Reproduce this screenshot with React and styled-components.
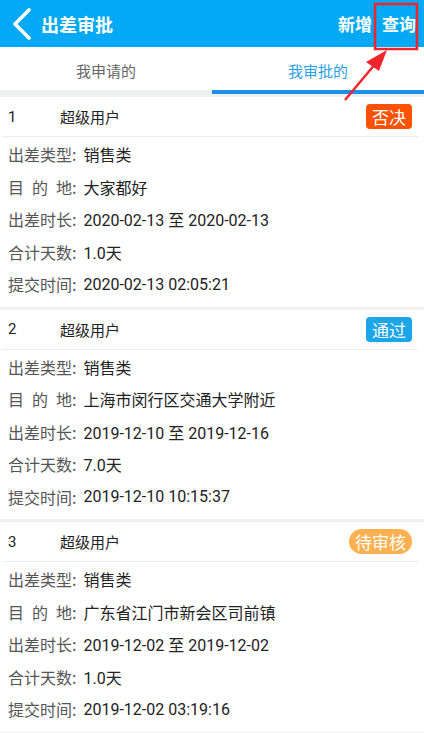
import React from "react";
import styled, { createGlobalStyle } from "styled-components";

const GlobalStyle = createGlobalStyle`
  body {
    margin: 0;
    background: #f0f0f0;
    font-family: Roboto, "Noto Sans CJK SC", sans-serif;
  }
`;

const records = [
  {
    no: 1,
    user: "超级用户",
    status: "否决",
    kind: "reject",
    type: "销售类",
    place: "大家都好",
    range: "2020-02-13 至 2020-02-13",
    days: "1.0天",
    time: "2020-02-13 02:05:21",
  },
  {
    no: 2,
    user: "超级用户",
    status: "通过",
    kind: "pass",
    type: "销售类",
    place: "上海市闵行区交通大学附近",
    range: "2019-12-10 至 2019-12-16",
    days: "7.0天",
    time: "2019-12-10 10:15:37",
  },
  {
    no: 3,
    user: "超级用户",
    status: "待审核",
    kind: "wait",
    type: "销售类",
    place: "广东省江门市新会区司前镇",
    range: "2019-12-02 至 2019-12-02",
    days: "1.0天",
    time: "2019-12-02 03:19:16",
  },
];

const badgeColors = {
  reject: "#ff5200",
  pass: "#1ba6ea",
  wait: "#ffb050",
};

function App() {
  return (
    <>
      <GlobalStyle />
      <Page>
        <TopBar>
          <Back viewBox="0 0 22 32">
            <polyline points="18,2 4,16 18,30" />
          </Back>
          <Title>出差审批</Title>
          <Actions>
            <Action>新增</Action>
            <Action>查询</Action>
          </Actions>
        </TopBar>
        <Tabs>
          <Tab>我申请的</Tab>
          <Tab active>我审批的</Tab>
        </Tabs>
        <List>
          {records.map((r) => (
            <Card key={r.no}>
              <CardHead>
                <No>{r.no}</No>
                <User>{r.user}</User>
                <Badge kind={r.kind}>{r.status}</Badge>
              </CardHead>
              <Rows>
                <Row>
                  <Label>出差类型</Label>:<Value>{r.type}</Value>
                </Row>
                <Row>
                  <Label>目的地</Label>:<Value>{r.place}</Value>
                </Row>
                <Row>
                  <Label>出差时长</Label>:<Value>{r.range}</Value>
                </Row>
                <Row>
                  <Label>合计天数</Label>:<Value>{r.days}</Value>
                </Row>
                <Row>
                  <Label>提交时间</Label>:<Value>{r.time}</Value>
                </Row>
              </Rows>
            </Card>
          ))}
        </List>
        <Marker viewBox="0 0 424 110">
          <rect x="375" y="4" width="42" height="45" />
          <line x1="345" y1="100" x2="376" y2="63" />
          <polygon points="387,50 366,62 379,71" />
        </Marker>
      </Page>
    </>
  );
}

const Page = styled.div`
  position: relative;
  width: 424px;
  min-height: 733px;
  background: #f0f0f0;
`;

const TopBar = styled.header`
  display: flex;
  align-items: center;
  height: 47px;
  padding: 0 8px 0 11px;
  box-sizing: border-box;
  background: #03a9f4;
  color: #fff;
`;

const Back = styled.svg`
  width: 22px;
  height: 32px;
  fill: none;
  stroke: #fff;
  stroke-width: 3.6;
  stroke-linecap: round;
  stroke-linejoin: round;
  margin-right: 8px;
`;

const Title = styled.h1`
  margin: 0;
  font: 700 18px "Noto Sans CJK SC", sans-serif;
  flex: 1;
`;

const Actions = styled.div`
  display: flex;
  gap: 10px;
`;

const Action = styled.span`
  font: 700 17px "Noto Sans CJK SC", sans-serif;
`;

const Tabs = styled.nav`
  display: flex;
  height: 47px;
  background: #fff;
`;

const Tab = styled.div`
  flex: 1;
  display: flex;
  align-items: center;
  justify-content: center;
  font: 400 15px "Noto Sans CJK SC", sans-serif;
  color: ${(p) => (p.active ? "#2aa0ea" : "#666")};
  border-bottom: 4px solid ${(p) => (p.active ? "#1e8fe6" : "#eceff0")};
  padding-top: 4px;
`;

const List = styled.div`
  display: flex;
  flex-direction: column;
  gap: 3px;
  padding-top: 3px;
`;

const Card = styled.section`
  background: #fff;
  padding-bottom: 6px;
`;

const CardHead = styled.div`
  display: flex;
  align-items: center;
  height: 39px;
  margin: 0 6px 0 2px;
  padding: 0 6px 0 6px;
  border-bottom: 1px solid #e8eef0;
`;

const No = styled.span`
  width: 52px;
  font: 400 15px Roboto, sans-serif;
  color: #222;
`;

const User = styled.span`
  flex: 1;
  font: 400 15px "Noto Sans CJK SC", sans-serif;
  color: #222;
`;

const Badge = styled.span`
  padding: 0 6px;
  height: 25px;
  line-height: 25px;
  border-radius: ${(p) => (p.kind === "wait" ? "13px" : "4px")};
  background: ${(p) => badgeColors[p.kind]};
  color: #fff;
  font: 400 17px "Noto Sans CJK SC", sans-serif;
`;

const Rows = styled.div`
  padding: 1px 8px 0;
`;

const Row = styled.div`
  height: 32.5px;
  display: flex;
  align-items: center;
  font: 400 16px "Noto Sans CJK SC", sans-serif;
  color: #555;
`;

const Label = styled.span`
  display: inline-block;
  width: 64px;
  text-align: justify;
  text-align-last: justify;
`;

const Value = styled.span`
  margin-left: 7px;
  font: 400 16px Roboto, "Noto Sans CJK SC", sans-serif;
  color: #222;
`;

const Marker = styled.svg`
  position: absolute;
  left: 0;
  top: 0;
  width: 424px;
  height: 110px;
  pointer-events: none;
  rect {
    fill: none;
    stroke: #f0262c;
    stroke-width: 2.5;
  }
  line {
    stroke: #f0262c;
    stroke-width: 2.5;
  }
  polygon {
    fill: #f0262c;
  }
`;

export default App;
